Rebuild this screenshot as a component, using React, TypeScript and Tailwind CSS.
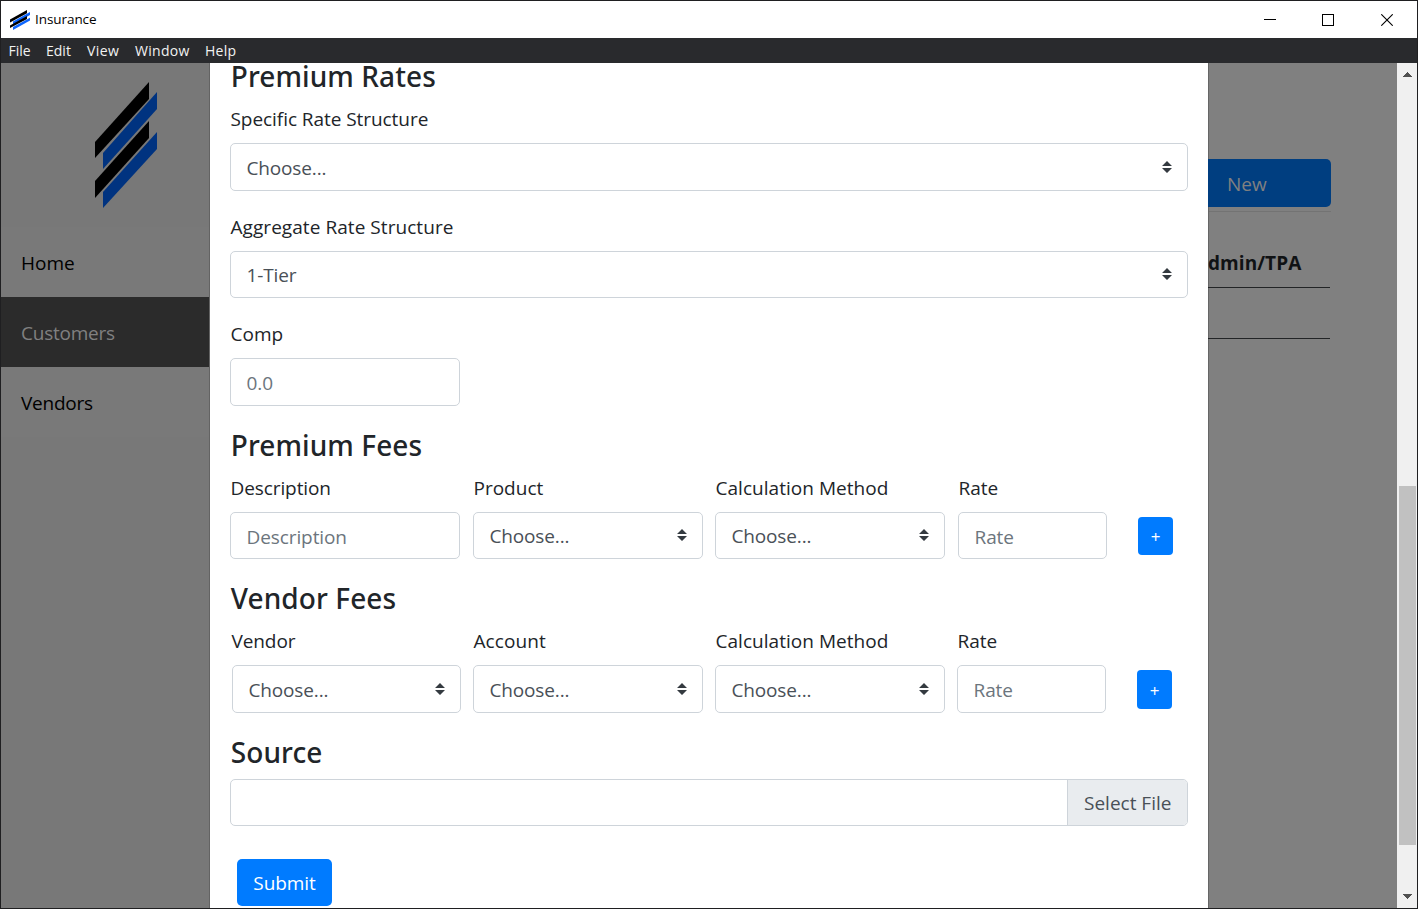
import React from 'react';

const cx = (...parts: (string | undefined)[]) => parts.filter(Boolean).join(' ');

function Logo({ className }: { className?: string }) {
  return (
    <svg viewBox="0 0 62 126" className={className}>
      <path d="M0 60 L54 0 V17 L0 76Z" fill="#000" />
      <path d="M8 71 L62 10 V27 L8 87Z" fill="currentColor" />
      <path d="M0 99 L54 39 V56 L0 116Z" fill="#000" />
      <path d="M8 110 L62 50 V67 L8 126Z" fill="currentColor" />
    </svg>
  );
}

function AppIcon() {
  return (
    <svg width="20" height="20" viewBox="0 0 20 20">
      <path d="M0 9.6L17 0V3.2L0 12.6Z" fill="#000" />
      <path d="M3 11.5L20 2V5L3 14.4Z" fill="#0d66ff" />
      <path d="M0 15.4L17 6V9L0 18Z" fill="#000" />
      <path d="M3 17L20 7.7V10.6L3 20Z" fill="#0d66ff" />
    </svg>
  );
}

function TitleBar() {
  return (
    <div className="flex h-[37px] shrink-0 items-center bg-white pl-[9px] text-black">
      <AppIcon />
      <span className="ml-[5px] text-[13.5px] leading-[37px] tracking-[-0.005em]">Insurance</span>
      <div className="ml-auto flex pr-[24px]">
        <svg width="12" height="12" className="mr-[46px]" shapeRendering="crispEdges">
          <path d="M0 5.5H12" stroke="#000" />
        </svg>
        <svg width="12" height="12" className="mr-[47px]" shapeRendering="crispEdges">
          <rect x="0.5" y="0.5" width="11" height="11" fill="none" stroke="#000" />
        </svg>
        <svg width="12" height="12">
          <path d="M0.3 0.3L11.7 11.7M11.7 0.3L0.3 11.7" stroke="#000" strokeWidth="1.1" />
        </svg>
      </div>
    </div>
  );
}

function MenuBar() {
  return (
    <div className="flex h-[25px] shrink-0 bg-[#292a2d] pl-[7px] text-[14px] leading-[25px] text-[#f2f2f2]">
      <span className="w-[38px] pl-[0.5px]">File</span>
      <span className="w-[41px]">Edit</span>
      <span className="w-[48px] tracking-[0.03em]">View</span>
      <span className="w-[70px] tracking-[0.02em]">Window</span>
      <span className="tracking-[0.02em]">Help</span>
    </div>
  );
}

function Sidebar() {
  return (
    <aside className="flex w-[208px] shrink-0 flex-col bg-[#787878] text-black">
      <div className="h-[164px] pl-[94px] pt-[19px]">
        <Logo className="h-[126px] w-[62px] text-[#003380]" />
      </div>
      <div className="h-[70px] bg-[#797979] pl-5 leading-[72px]">Home</div>
      <div className="h-[70px] w-[209px] bg-[#2b2b2b] pl-5 leading-[72px] tracking-[-0.013em] text-[#808080]">Customers</div>
      <div className="h-[70px] bg-[#797979] pl-5 leading-[72px] tracking-[-0.013em]">Vendors</div>
    </aside>
  );
}

function Heading({ children, className }: { children: React.ReactNode; className?: string }) {
  return (
    <h3 className={cx("pl-[0.8px] font-['Noto_Sans',sans-serif] text-[28px] font-medium tracking-[0.003em]", className)}>
      {children}
    </h3>
  );
}

function Label({ children, className }: { children: React.ReactNode; className?: string }) {
  return (
    <label className={cx('mb-[9px] block h-[30px] whitespace-nowrap pl-[0.5px] leading-[30px]', className)}>{children}</label>
  );
}

function Select({ value, className }: { value: string; className?: string }) {
  return (
    <div className={cx('flex items-center justify-between rounded-[5px] border border-[#ced4da] bg-white px-[15px] text-[#495057]', className)}>
      <span className="pl-[0.5px] pt-[2px] tracking-[-0.008em]">{value}</span>
      <svg width="10" height="12" viewBox="0 0 10 12" className="mb-px">
        <path d="M5 0L10 5H0ZM0 7H10L5 12Z" fill="#343a40" />
      </svg>
    </div>
  );
}

function Input({ placeholder, className }: { placeholder: string; className?: string }) {
  return (
    <div className={cx('flex items-center rounded-[5px] border border-[#ced4da] bg-white pl-[15.5px] pt-[3px] tracking-[-0.005em] text-[#6c757d]', className)}>
      {placeholder}
    </div>
  );
}

function AddButton({ className }: { className?: string }) {
  return (
    <button className={cx('flex w-[35px] items-center justify-center self-start rounded bg-[#007bff] pt-[2px] text-[17px] text-white', className)}>
      +
    </button>
  );
}

function FormDialog() {
  return (
    <main className="flex w-[998px] shrink-0 flex-col bg-white px-5 text-[#212529]">
      <Heading className="mb-[10px] h-[31px] leading-[26px]">Premium Rates</Heading>
      <Label className="tracking-[-0.003em]">Specific Rate Structure</Label>
      <Select value="Choose..." className="mb-[21px] h-[48px]" />
      <Label className="tracking-[0.003em]">Aggregate Rate Structure</Label>
      <Select value="1-Tier" className="mb-[21px] h-[47px]" />
      <Label>Comp</Label>
      <Input placeholder="0.0" className="mb-[21px] h-[48px] w-[230px]" />

      <Heading className="mb-[10px] h-9 leading-9">Premium Fees</Heading>
      <div className="mb-[21px] flex">
        <div className="mr-[13px] w-[230px]">
          <Label className="tracking-[-0.005em]">Description</Label>
          <Input placeholder="Description" className="h-[47px]" />
        </div>
        <div className="mr-[12px] w-[230px]">
          <Label>Product</Label>
          <Select value="Choose..." className="h-[47px]" />
        </div>
        <div className="mr-[13px] w-[230px]">
          <Label className="tracking-[0.002em]">Calculation Method</Label>
          <Select value="Choose..." className="h-[47px]" />
        </div>
        <div className="mr-[31px] w-[149px]">
          <Label>Rate</Label>
          <Input placeholder="Rate" className="h-[47px]" />
        </div>
        <AddButton className="mt-[44px] h-[38px]" />
      </div>

      <Heading className="mb-[10px] h-9 leading-9">Vendor Fees</Heading>
      <div className="mb-[21px] flex pl-[2px]">
        <div className="mr-[12px] w-[229px]">
          <Label className="-ml-px tracking-[-0.005em]">Vendor</Label>
          <Select value="Choose..." className="h-[48px]" />
        </div>
        <div className="mr-[12px] w-[230px]">
          <Label className="tracking-[0.005em]">Account</Label>
          <Select value="Choose..." className="h-[48px]" />
        </div>
        <div className="mr-[12px] w-[230px]">
          <Label className="tracking-[0.002em]">Calculation Method</Label>
          <Select value="Choose..." className="h-[48px]" />
        </div>
        <div className="mr-[31px] w-[149px]">
          <Label>Rate</Label>
          <Input placeholder="Rate" className="h-[48px]" />
        </div>
        <AddButton className="mt-[44px] h-[39px]" />
      </div>

      <Heading className="mb-[9px] h-9 leading-9">Source</Heading>
      <div className="mb-[33px] flex h-[47px] overflow-hidden rounded-[5px] border border-[#ced4da]">
        <div className="flex-1" />
        <div className="w-[120px] border-l border-[#ced4da] bg-[#e9ecef] pl-[16px] leading-[46px] text-[#495057]">Select File</div>
      </div>
      <button className="ml-[7px] h-[47px] w-[95px] shrink-0 rounded-[5px] bg-[#007bff] pt-px tracking-[-0.005em] text-white">
        Submit
      </button>
    </main>
  );
}

function Backdrop() {
  return (
    <section className="flex flex-1 flex-col border-l border-[#666] pt-[96px]">
      <div className="-ml-px h-[48px] w-[123px] rounded-r-[5px] bg-[#003e80] pl-[19px] leading-[50px] text-[#808080]">New</div>
      <div className="mt-[4px] h-px w-[122px] bg-[#737373]" />
      <div className="-ml-px h-[76px] w-[122px] border-b border-[#222426] pt-[31px] font-bold leading-[40px] tracking-[0.003em] text-[#101214]">
        dmin/TPA
      </div>
      <div className="-ml-px h-[51px] w-[122px] border-b border-[#222426]" />
    </section>
  );
}

function ScrollBar() {
  return (
    <div className="flex w-5 shrink-0 flex-col items-center bg-[#f0f0f0]">
      <svg width="9" height="5" className="mt-[9px]" shapeRendering="crispEdges">
        <path d="M4.5 0L9 5H0Z" fill="#505050" />
      </svg>
      <div className="mt-[409px] h-[359px] w-[17px] bg-[#c1c1c1]" />
      <svg width="9" height="5" className="mt-[49px]" shapeRendering="crispEdges">
        <path d="M0 0H9L4.5 5Z" fill="#505050" />
      </svg>
    </div>
  );
}

export default function App() {
  return (
    <div className="flex h-[909px] w-[1418px] flex-col overflow-hidden border border-[#1f1f21] font-['Open_Sans','Noto_Sans',sans-serif] text-[19px]">
      <TitleBar />
      <MenuBar />
      <div className="flex min-h-0 flex-1 overflow-hidden bg-[#808080]">
        <Sidebar />
        <div className="w-px shrink-0 bg-[#636363]" />
        <FormDialog />
        <Backdrop />
        <ScrollBar />
      </div>
    </div>
  );
}
